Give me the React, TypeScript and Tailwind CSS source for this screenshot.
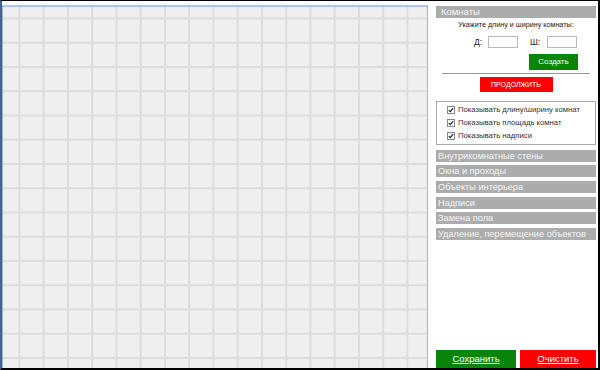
import React from "react";

function Check() {
  return (
    <svg width="8" height="8" viewBox="0 0 8 8" className="shrink-0">
      <rect x="0.5" y="0.5" width="7" height="7" fill="#fff" stroke="#7a8aa8" />
      <path d="M1.8 4.1 L3.3 5.7 L6.2 2.2" fill="none" stroke="#222" strokeWidth="1.2" />
    </svg>
  );
}

const bars = [
  "Внутрикомнатные стены",
  "Окна и проходы",
  "Объекты интерьера",
  "Надписи",
  "Замена пола",
  "Удаление, перемещение объектов",
];

const checks = [
  "Показывать длину/ширину комнат",
  "Показывать площадь комнат",
  "Показывать надписи",
];

export default function App() {
  return (
    <div className="w-[600px] h-[370px] bg-white flex border-t border-t-black border-r-2 border-r-black border-b-2 border-b-black border-l-2 border-l-[#44638f] font-['Liberation_Sans',Arial,sans-serif]">
      <div className="mt-[4px] w-[426px] shrink-0 border-t-2 border-t-[#a6c8ec] border-l border-l-[#8fb2dc] border-r border-r-[#8fb8e8] bg-[#efefef] bg-[linear-gradient(to_right,#dcdcdc_2px,transparent_2px),linear-gradient(to_bottom,#dcdcdc_2px,transparent_2px)] bg-[size:24.25px_24.25px] bg-[position:15.5px_10.5px]" />
      <div className="ml-[8px] w-[160px] flex flex-col">
        <div className="mt-[5px] h-[12px] bg-[#acacac] text-[#f6f6f6] text-[9.5px] leading-[12px] pl-[5px]">Комнаты</div>
        <div className="mt-[2px] text-center text-[7.2px] leading-[10px] text-[#222]">Укажите длину и ширину комнаты:</div>
        <div className="mt-[6px] flex items-center pl-[38px] text-[8.5px] text-[#222]">
          <span className="w-[9px]">Д:</span>
          <div className="ml-[5px] w-[30px] h-[12px] border border-[#b8b8b8] bg-white" />
          <span className="ml-[12px] w-[13px]">Ш:</span>
          <div className="ml-[4px] w-[30px] h-[12px] border border-[#b8b8b8] bg-white" />
        </div>
        <div className="mt-[5px] flex justify-end pr-[18px]">
          <div className="w-[49px] h-[16px] bg-[#088408] text-white text-[8px] leading-[16px] text-center">Создать</div>
        </div>
        <div className="mt-[3px] mx-[6px] h-px bg-[#999]" />
        <div className="mt-[3px] flex justify-center">
          <div className="w-[73px] h-[15px] bg-[#ff0000] text-white text-[7px] leading-[15px] text-center">ПРОДОЛЖИТЬ</div>
        </div>
        <div className="mt-[9px] h-[44px] border border-[#aaaaaa] flex flex-col justify-center gap-[4px] pl-[10px]">
          {checks.map((c) => (
            <div key={c} className="flex items-center gap-[3px] text-[7.7px] leading-[9px] text-[#333] whitespace-nowrap">
              <Check />
              <span>{c}</span>
            </div>
          ))}
        </div>
        <div className="mt-[5px] flex flex-col gap-[3.6px]">
          {bars.map((b) => (
            <div key={b} className="h-[12px] bg-[#acacac] text-[#f6f6f6] text-[9.2px] leading-[12px] pl-[2px] whitespace-nowrap">{b}</div>
          ))}
        </div>
        <div className="mt-auto flex gap-[4px]">
          <div className="w-[80px] h-[18px] bg-[#088408] text-white text-[9.5px] leading-[18px] text-center underline">Сохранить</div>
          <div className="w-[76px] h-[18px] bg-[#ff0000] text-white text-[9.5px] leading-[18px] text-center underline">Очистить</div>
        </div>
      </div>
    </div>
  );
}
